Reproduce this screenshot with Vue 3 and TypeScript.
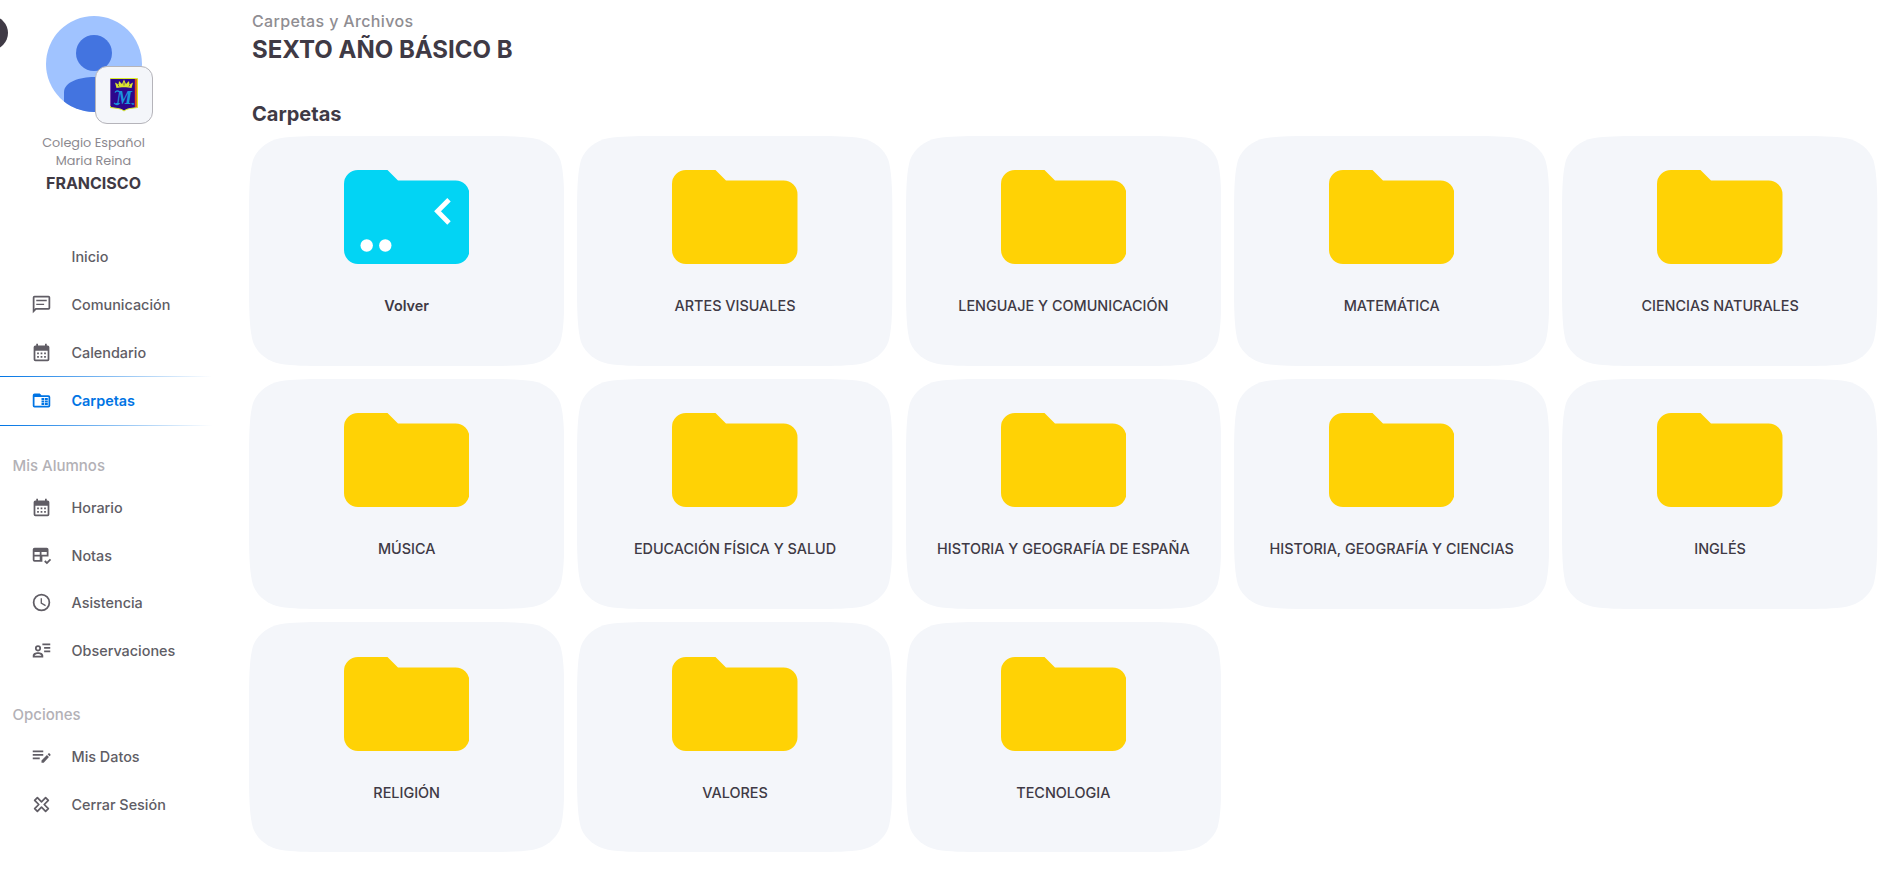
<script setup lang="ts">
interface MenuItem {
  label: string
  icon?: string
  active?: boolean
}

const icons: Record<string, string> = {
  chat: 'M4 2h16a2 2 0 0 1 2 2v12a2 2 0 0 1-2 2H6l-4 4V4a2 2 0 0 1 2-2zM4 4v13.200L5.200 16H20V4zM6 6.500h12v1.700H6zM6 11h9v1.700H6z',
  calendar: 'M19 4h-1V2h-2v2H8V2H6v2H5a2 2 0 0 0-2 2v14a2 2 0 0 0 2 2h14a2 2 0 0 0 2-2V6a2 2 0 0 0-2-2zm0 16H5V10h14v10zM9 14H7v-2h2v2zm4 0h-2v-2h2v2zm4 0h-2v-2h2v2zm-8 4H7v-2h2v2zm4 0h-2v-2h2v2zm4 0h-2v-2h2v2z',
  folder: 'M4 4a2 2 0 0 0-2 2v12a2 2 0 0 0 2 2h16a2 2 0 0 0 2-2V8a2 2 0 0 0-2-2h-8l-2-2zM4 8h16v10H4zM12 9h3.200v2.300H12zM16 9h3.200v2.300H16zM12 11.900h3.200v2.300H12zM16 11.900h3.200v2.300H16zM12 14.800h3.200v2.300H12zM16 14.800h3.200v2.300H16z',
  grades: 'M4 3a2 2 0 0 0-2 2v12a2 2 0 0 0 2 2h9v-6h7V5a2 2 0 0 0-2-2H4zm0 5h6v3H4V8zm8 0h6v3h-6V8zm-8 5h6v4H4v-4zm12.500 4.500L15 19l3.200 3L23 17.100l-1.400-1.400-3.400 3.400-1.700-1.600z',
  clock: 'M12 2a10 10 0 1 0 0 20 10 10 0 0 0 0-20zm0 18a8 8 0 1 1 0-16 8 8 0 0 1 0 16zm.5-13H11v6l5.250 3.150.75-1.230-4.500-2.670z',
  person: 'M13 4h9v2h-9V4zm2 4h7v2h-7V8zm0 4h7v2h-7v-2zM8 6a3.500 3.500 0 1 0 0 7 3.500 3.500 0 0 0 0-7zm0 2a1.500 1.500 0 1 1 0 3 1.500 1.500 0 0 1 0-3zm0 6c-3 0-6 1.400-6 3.700V20h12v-2.300C14 15.400 11 14 8 14zm0 2c1.700 0 3.500.7 3.900 2H4.100C4.500 16.700 6.300 16 8 16z',
  edit: 'M2 5h12v2H2V5zm0 4h12v2H2V9zm0 4h8v2H2v-2zm16.200-2.800 2.300 2.300L14.500 19H12v-2.500l6.200-6.300zm.8-.8.900-.8c.4-.4 1-.4 1.400 0l.8.800c.4.400.4 1 0 1.400l-.8.900L19 9.400z',
}

const mainMenu: MenuItem[] = [
  { label: 'Inicio' },
  { label: 'Comunicación', icon: 'chat' },
  { label: 'Calendario', icon: 'calendar' },
  { label: 'Carpetas', icon: 'folder', active: true },
]
const studentMenu: MenuItem[] = [
  { label: 'Horario', icon: 'calendar' },
  { label: 'Notas', icon: 'grades' },
  { label: 'Asistencia', icon: 'clock' },
  { label: 'Observaciones', icon: 'person' },
]
const optionMenu: MenuItem[] = [
  { label: 'Mis Datos', icon: 'edit' },
  { label: 'Cerrar Sesión', icon: 'close' },
]
const groups = [
  { title: '', items: mainMenu },
  { title: 'Mis Alumnos', items: studentMenu },
  { title: 'Opciones', items: optionMenu },
]

const folders: string[] = [
  'Volver',
  'ARTES VISUALES',
  'LENGUAJE Y COMUNICACIÓN',
  'MATEMÁTICA',
  'CIENCIAS NATURALES',
  'MÚSICA',
  'EDUCACIÓN FÍSICA Y SALUD',
  'HISTORIA Y GEOGRAFÍA DE ESPAÑA',
  'HISTORIA, GEOGRAFÍA Y CIENCIAS',
  'INGLÉS',
  'RELIGIÓN',
  'VALORES',
  'TECNOLOGIA',
]
</script>

<template>
  <div class="page">
    <aside class="sidebar">
      <span class="toggle"></span>
      <div class="profile">
        <div class="portrait">
          <svg class="avatar" viewBox="0 0 96 96">
            <defs><clipPath id="disc"><circle cx="48" cy="48" r="48" /></clipPath></defs>
            <g clip-path="url(#disc)">
              <rect width="96" height="96" fill="#a0c3ff" />
              <circle cx="48" cy="37" r="18" fill="#4374e0" />
              <path d="M18 96V76C18 66 34 61 48 61s30 5 30 15v20z" fill="#4374e0" />
            </g>
          </svg>
          <div class="badge">
            <svg class="crest" viewBox="0 0 28 34">
              <path d="M.5.500h27v29l-6 .8c-4 .5-5.500 1.200-7.500 2.700-2-1.500-3.500-2.200-7.500-2.700l-6-.8z" fill="#2d078c" stroke="#d8ee2c" />
              <path d="M25.600 1v28" stroke="#f04a12" stroke-width="1.600" />
              <path d="M27 1v28.500" stroke="#ffc800" />
              <path d="M.5 1v27" stroke="#7a4fb0" />
              <path d="M6.500 10 5 4.500l3.500 2L9 3l3 3 2-4.500L16 6l3-3 .5 3.500 3.500-2L21.500 10c-4-1-11-1-15 0z" fill="#dbe62f" />
              <path d="M8 6.500l1 2M14 4.500v3M20 6.500l-1 2" stroke="#5c3f50" stroke-width=".8" />
              <text x="14" y="26" class="initial">M</text>
              <path d="M4 25c2 2 4 1.500 5 .5M5 14.500c1-2 3-2 4-1M22 25c0 1.500 1 1.500 2 .5" fill="none" stroke="#1a94dc" stroke-width="1.300" />
            </svg>
          </div>
        </div>
        <p class="school">Colegio Español<br />Maria Reina</p>
        <strong class="user">FRANCISCO</strong>
      </div>
      <nav class="menu">
        <section v-for="group in groups" :key="group.title" class="group">
          <h3 v-if="group.title" class="group-title">{{ group.title }}</h3>
          <a v-for="item in group.items" :key="item.label" class="item" :class="{ active: item.active }">
            <svg class="icon" viewBox="0 0 24 24">
              <path v-if="item.icon === 'close'" d="M7.300 4.200 12 8.900l4.700-4.700 3.100 3.100-4.700 4.700 4.700 4.700-3.100 3.100-4.700-4.700-4.700 4.700-3.100-3.100L8.900 12 4.200 7.300z" fill="none" stroke="currentColor" stroke-width="2" stroke-linejoin="round" />
              <path v-else-if="item.icon" :d="icons[item.icon]" fill="currentColor" fill-rule="evenodd" />
            </svg>
            <span>{{ item.label }}</span>
          </a>
        </section>
      </nav>
    </aside>

    <main class="content">
      <p class="crumb">Carpetas y Archivos</p>
      <h1 class="title">SEXTO AÑO BÁSICO B</h1>
      <h2 class="subtitle">Carpetas</h2>
      <div class="grid">
        <div v-for="(name, i) in folders" :key="name" class="card" :class="{ back: i === 0 }">
          <svg class="shape" viewBox="0 0 315 230" preserveAspectRatio="none">
            <path d="M0 75C0 50 1 34 4 24C8 13 19 4.500 31 2.300C43 .3 58 0 75 0H240C257 0 272 .3 284 2.300C296 4.500 307 13 311 24C314 34 315 50 315 75V155C315 180 314 196 311 206C307 217 296 225.500 284 227.700C272 229.700 257 230 240 230H75C58 230 43 229.700 31 227.700C19 225.500 8 217 4 206C1 196 0 180 0 155z" />
          </svg>
          <svg class="folder" viewBox="0 0 125.500 94">
            <path d="M14 0h29.500L54 10.500h57.500a14 14 0 0 1 14 14V80a14 14 0 0 1-14 14H14A14 14 0 0 1 0 80V14A14 14 0 0 1 14 0z" fill="currentColor" />
            <g v-if="i === 0">
              <circle cx="22.700" cy="75.500" r="6.200" fill="#fff" />
              <circle cx="41.300" cy="75.500" r="6.200" fill="#fff" />
              <path d="M105 29.700 93.500 41.300 105 53" fill="none" stroke="#fff" stroke-width="4.800" />
            </g>
          </svg>
          <span class="name">{{ name }}</span>
        </div>
      </div>
    </main>
  </div>
</template>

<style>
body {
  margin: 0;
  background: #fff;
}
</style>

<style scoped>
.page {
  display: flex;
  height: 883px;
  overflow: hidden;
  font-family: Inter, sans-serif;
  color: #3f3a45;
}
.sidebar {
  position: relative;
  flex: 0 0 249px;
}
.toggle {
  position: absolute;
  left: -26px;
  top: 16px;
  width: 34px;
  height: 34px;
  border-radius: 50%;
  background: #3f3a45;
}
.profile {
  width: 187px;
  padding-top: 16px;
  display: flex;
  flex-direction: column;
  align-items: center;
  height: 223px;
  box-sizing: border-box;
}
.portrait {
  position: relative;
  width: 96px;
  height: 96px;
}
.avatar {
  display: block;
  width: 96px;
  height: 96px;
}
.badge {
  position: absolute;
  left: 49px;
  top: 50px;
  width: 58px;
  height: 58px;
  box-sizing: border-box;
  border: 1px solid #b5b4ba;
  border-radius: 12px;
  background: #f4f6fa;
  display: flex;
  align-items: center;
  justify-content: center;
}
.crest {
  width: 28px;
  height: 34px;
}
.initial {
  font: italic 700 18px 'Liberation Serif', serif;
  text-anchor: middle;
  fill: #1a94dc;
}
.school {
  margin: 22px 0 0;
  font: 400 12.800px/18px Poppins, Inter, sans-serif;
  text-align: center;
  color: #8c898f;
}
.user {
  margin-top: 3px;
  font-size: 16px;
  line-height: 20px;
}
.menu {
  padding-top: 10px;
}
.item {
  display: flex;
  align-items: center;
  height: 47.400px;
  padding-left: 31px;
  gap: 19.500px;
  font-size: 14.400px;
  font-weight: 500;
  color: #605d65;
}
.group:first-child .item {
  box-sizing: border-box;
  height: 48px;
  padding-bottom: 1px;
}
.icon {
  width: 21px;
  height: 21px;
}
.active {
  position: relative;
  color: #0074e4;
  font-weight: 600;
}
.active::before,
.active::after {
  content: '';
  position: absolute;
  left: 0;
  width: 212px;
  height: 1px;
  background: linear-gradient(90deg, #0074e4, transparent);
}
.active::before { top: -1px; }
.active::after { bottom: -1px; }
.group-title {
  margin: 0;
  padding: 31px 0 8.300px 12.500px;
  font-size: 15px;
  line-height: 20px;
  font-weight: 500;
  color: #b3b1b6;
}
.content {
  flex: 1;
  padding-right: 16.250px;
}
.crumb {
  margin: 11px 0 0 3px;
  font-size: 16px;
  line-height: 20px;
  font-weight: 500;
  letter-spacing: 0.350px;
  color: #8f8d92;
}
.title {
  margin: 4px 0 0 3px;
  font-size: 24px;
  line-height: 30px;
  font-weight: 700;
}
.subtitle {
  margin: 36px 0 0 3px;
  font-size: 20px;
  line-height: 26px;
  font-weight: 700;
}
.grid {
  margin-top: 9px;
  display: grid;
  grid-template-columns: repeat(5, 1fr);
  grid-auto-rows: 230px;
  gap: 13.200px 13px;
}
.card {
  position: relative;
  display: flex;
  flex-direction: column;
  align-items: center;
  color: #ffd205;
}
.back {
  color: #02d4f4;
}
.shape {
  position: absolute;
  inset: 0;
  width: 100%;
  height: 100%;
  fill: #f4f6fa;
}
.folder {
  position: relative;
  margin-top: 34.200px;
  width: 125.500px;
  height: 94px;
}
.name {
  position: relative;
  margin-top: 32px;
  font-size: 14.400px;
  line-height: 20px;
  font-weight: 500;
  color: #3f3a45;
  white-space: nowrap;
}
.back .name {
  font-weight: 600;
}
</style>
